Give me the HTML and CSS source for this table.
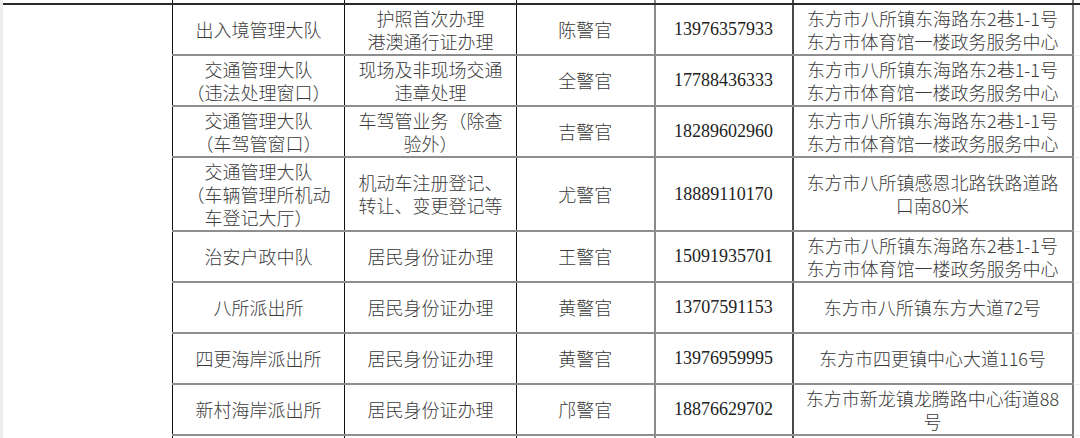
FILE: index.html
```html
<!DOCTYPE html>
<html lang="zh-CN">
<head>
<meta charset="utf-8">
<title>办事窗口一览</title>
<link rel="stylesheet" href="styles.css">
</head>
<body>
<table class="grid">
  <colgroup>
    <col class="w-unit"><col class="w-dept"><col class="w-biz"><col class="w-name"><col class="w-tel"><col class="w-addr"><col class="w-pad">
  </colgroup>
  <tr class="r-cut">
    <td class="unit"></td><td class="dept"></td><td class="biz"></td><td class="name"></td><td class="tel"></td><td class="addr"></td><td class="pad"></td>
  </tr>
  <tr class="r-std">
    <td class="unit" rowspan="9"></td>
    <td class="dept">出入境管理大队</td>
    <td class="biz">护照首次办理<br>港澳通行证办理</td>
    <td class="name">陈警官</td>
    <td class="tel">13976357933</td>
    <td class="addr">东方市八所镇东海路东2巷1-1号<br>东方市体育馆一楼政务服务中心</td>
    <td class="pad"></td>
  </tr>
  <tr class="r-std">
    <td class="dept">交通管理大队<br>（违法处理窗口）</td>
    <td class="biz">现场及非现场交通<br>违章处理</td>
    <td class="name">全警官</td>
    <td class="tel">17788436333</td>
    <td class="addr">东方市八所镇东海路东2巷1-1号<br>东方市体育馆一楼政务服务中心</td>
    <td class="pad"></td>
  </tr>
  <tr class="r-std">
    <td class="dept">交通管理大队<br>（车驾管窗口）</td>
    <td class="biz">车驾管业务（除查<br>验外）</td>
    <td class="name">吉警官</td>
    <td class="tel">18289602960</td>
    <td class="addr">东方市八所镇东海路东2巷1-1号<br>东方市体育馆一楼政务服务中心</td>
    <td class="pad"></td>
  </tr>
  <tr class="r-tall">
    <td class="dept">交通管理大队<br>（车辆管理所机动<br>车登记大厅）</td>
    <td class="biz">机动车注册登记、<br>转让、变更登记等</td>
    <td class="name">尤警官</td>
    <td class="tel">18889110170</td>
    <td class="addr">东方市八所镇感恩北路铁路道路<br>口南80米</td>
    <td class="pad"></td>
  </tr>
  <tr class="r-std">
    <td class="dept">治安户政中队</td>
    <td class="biz">居民身份证办理</td>
    <td class="name">王警官</td>
    <td class="tel">15091935701</td>
    <td class="addr">东方市八所镇东海路东2巷1-1号<br>东方市体育馆一楼政务服务中心</td>
    <td class="pad"></td>
  </tr>
  <tr class="r-std">
    <td class="dept">八所派出所</td>
    <td class="biz">居民身份证办理</td>
    <td class="name">黄警官</td>
    <td class="tel">13707591153</td>
    <td class="addr">东方市八所镇东方大道72号</td>
    <td class="pad"></td>
  </tr>
  <tr class="r-std">
    <td class="dept">四更海岸派出所</td>
    <td class="biz">居民身份证办理</td>
    <td class="name">黄警官</td>
    <td class="tel">13976959995</td>
    <td class="addr">东方市四更镇中心大道116号</td>
    <td class="pad"></td>
  </tr>
  <tr class="r-std">
    <td class="dept">新村海岸派出所</td>
    <td class="biz">居民身份证办理</td>
    <td class="name">邝警官</td>
    <td class="tel">18876629702</td>
    <td class="addr">东方市新龙镇龙腾路中心街道88<br>号</td>
    <td class="pad"></td>
  </tr>
  <tr class="r-end">
    <td class="dept"></td><td class="biz"></td><td class="name"></td><td class="tel"></td><td class="addr"></td><td class="pad"></td>
  </tr>
</table>
</body>
</html>
```

FILE: styles.css
```css
html, body {
  margin: 0;
  padding: 0;
  background: #ffffff;
  overflow: hidden;
}

.grid {
  border-collapse: collapse;
  table-layout: fixed;
  width: 1080px;
  font-family: "Noto Sans CJK SC", "Noto Sans", sans-serif;
  font-weight: 300;
  font-size: 18px;
  line-height: 23px;
  color: #3a3a3a;
}

.w-unit { width: 171px; }
.w-dept { width: 172px; }
.w-biz { width: 172px; }
.w-name { width: 138px; }
.w-tel { width: 138px; }
.w-addr { width: 280px; }
.w-pad { width: 9px; }

.grid td {
  padding: 0;
  text-align: center;
  vertical-align: middle;
  white-space: nowrap;
  border-bottom: 2px solid #8e8e8e;
}

.r-cut { height: 4px; }
.r-cut td { border-bottom: 2px solid #2a2a2a; }
.r-std { height: 51px; }
.r-tall { height: 74px; }
.r-end { height: 10px; }
.r-end td { border-bottom: none; }

.grid td.unit {
  border-left: 3px solid #ededed;
}

.dept { border-left: 1px solid #111111; }
.biz { border-left: 1px solid #111111; }
.name { border-left: 1px solid #111111; }
.tel {
  border-left: 2px solid #8a8a8a;
  font-family: "Liberation Serif", "Times New Roman", serif;
  font-weight: 400;
  color: #222222;
}
.addr {
  border-left: 2px solid #4a4a4a;
  border-right: 2px solid #7a7a7a;
}

.grid td.pad {
  border-bottom: 1px solid #eeeeee;
}
.grid .r-cut td.pad {
  border-bottom: 2px solid #2a2a2a;
}
```
